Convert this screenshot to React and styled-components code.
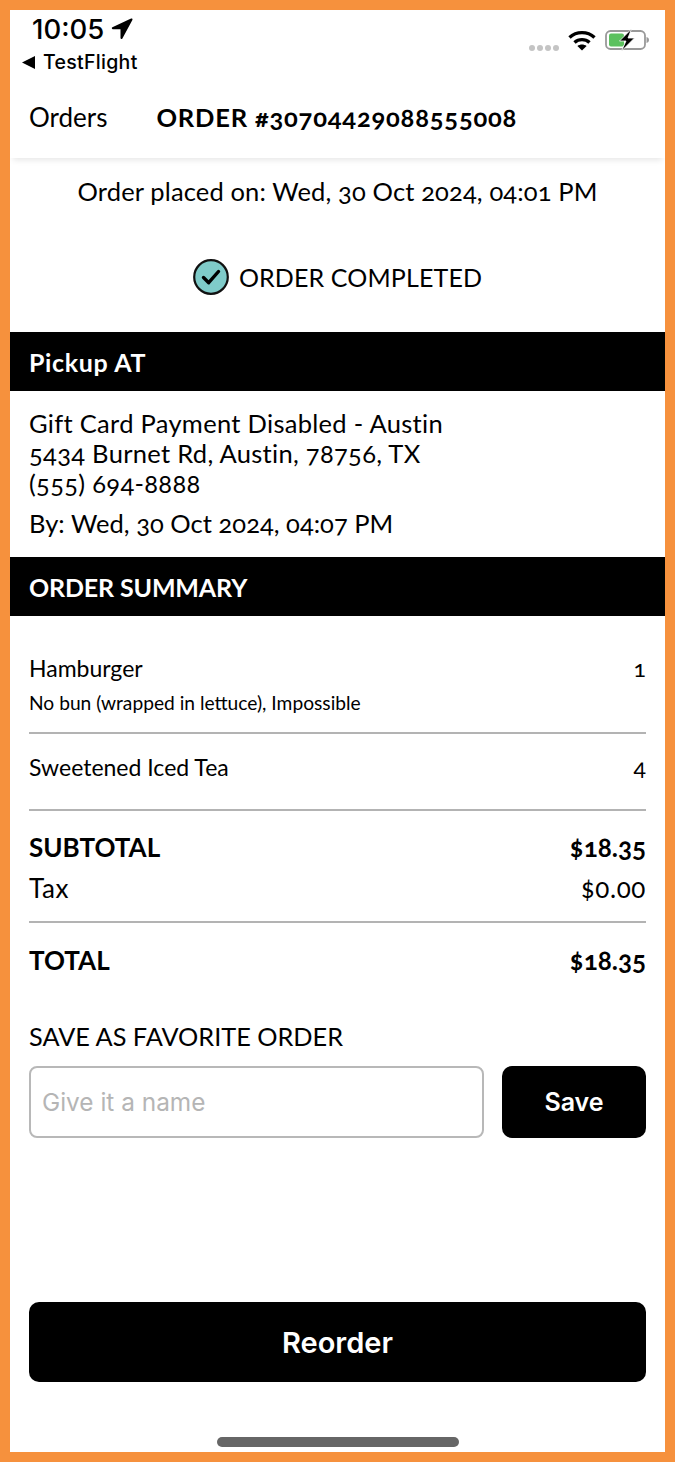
import styled, { createGlobalStyle } from 'styled-components';

const GlobalStyle = createGlobalStyle`
  html, body { margin: 0; padding: 0; background: #f6913d; }
  * { box-sizing: border-box; }
`;

const Frame = styled.div`
  width: 675px;
  height: 1462px;
  border: 10px solid #f6913d;
  background: #fff;
  display: flex;
  flex-direction: column;
  font-family: Lato, "Open Sans", sans-serif;
  font-variant-numeric: oldstyle-nums;
  color: #000;
  overflow: hidden;
`;

const StatusBar = styled.div`
  height: 80px;
  padding: 4px 14px 0 12px;
  display: flex;
  justify-content: space-between;
  font-family: Inter, sans-serif;
  font-variant-numeric: normal;
`;

const StatusLeft = styled.div`
  display: flex;
  flex-direction: column;
`;

const Clock = styled.div`
  display: flex;
  align-items: center;
  gap: 7px;
  margin-left: 10px;
  font-size: 27.5px;
  line-height: 30px;
  font-weight: 500;
`;

const BackLink = styled.div`
  display: flex;
  align-items: center;
  gap: 8px;
  margin-top: 6px;
  font-size: 19.5px;
  line-height: 24px;
  font-weight: 500;
  letter-spacing: 0.3px;
`;

const StatusRight = styled.div`
  display: flex;
  align-items: center;
  gap: 9px;
  height: 52px;
`;

const Signal = styled.div`
  display: flex;
  gap: 2px;
  margin-top: 16px;
`;

const SignalDot = styled.span`
  width: 6px;
  height: 6px;
  border-radius: 50%;
  background: #c4c4c4;
`;

const NavBar = styled.div`
  height: 68px;
  padding: 0 19px 14px;
  display: flex;
  align-items: center;
  gap: 49px;
  box-shadow: 0 5px 6px -3px rgba(0, 0, 0, 0.1);
`;

const NavBack = styled.div`
  font-size: 26px;
  font-weight: 400;
`;

const NavTitle = styled.div`
  font-size: 25.5px;
  font-weight: 700;
  letter-spacing: 0.8px;
`;

const PlacedOn = styled.div`
  margin-top: 18px;
  text-align: center;
  font-size: 25.5px;
  line-height: 30px;
  letter-spacing: 0.14px;
`;

const StatusRow = styled.div`
  margin-top: 53px;
  height: 36px;
  display: flex;
  justify-content: center;
  align-items: center;
  gap: 10px;
  font-size: 25px;
  letter-spacing: 0.13px;
`;

const SectionHeader = styled.div`
  height: 59px;
  margin-top: ${({ $top }) => $top}px;
  padding: 0 19px;
  display: flex;
  align-items: center;
  background: #000;
  color: #fff;
  font-size: 25px;
  font-weight: 700;
  letter-spacing: ${({ $spacing }) => $spacing}px;
`;

const Address = styled.div`
  margin-top: 17px;
  padding: 0 19px;
  font-size: 25.5px;
  line-height: 30px;
  letter-spacing: 0.3px;
`;

const PickupBy = styled.div`
  margin-top: 10px;
  padding: 0 19px;
  font-size: 25.5px;
  line-height: 30px;
  letter-spacing: 0.03px;
`;

const Summary = styled.div`
  padding: 0 19px;
  display: flex;
  flex-direction: column;
`;

const ItemRow = styled.div`
  display: flex;
  justify-content: space-between;
  align-items: center;
  padding-top: ${({ $top }) => $top}px;
  font-size: 23px;
  line-height: 28px;
`;

const ItemNote = styled.div`
  margin-top: 9px;
  font-size: 19.2px;
  line-height: 24px;
`;

const Divider = styled.div`
  height: 2px;
  background: #b3b3b3;
  margin-top: ${({ $top }) => $top}px;
`;

const TotalRow = styled.div`
  display: flex;
  justify-content: space-between;
  align-items: center;
  margin-top: ${({ $top }) => $top}px;
  font-size: 26px;
  line-height: 32px;
  font-weight: ${({ $bold }) => ($bold ? 700 : 400)};
  letter-spacing: ${({ $bold }) => ($bold ? 0 : 0.6)}px;
`;

const FavoriteLabel = styled.div`
  margin-top: 45px;
  font-size: 25.3px;
  line-height: 30px;
`;

const FavoriteRow = styled.div`
  margin-top: 15px;
  display: flex;
  gap: 18px;
`;

const NameInput = styled.input`
  flex: 1;
  min-width: 0;
  height: 72px;
  padding: 0 11px;
  border: 2px solid #b8b8b8;
  border-radius: 8px;
  background: #fff;
  font-family: Inter, sans-serif;
  font-size: 24.4px;
  outline: none;

  &::placeholder {
    color: #b5b5b5;
    opacity: 1;
  }
`;

const SolidButton = styled.button`
  border: none;
  border-radius: 10px;
  background: #000;
  color: #fff;
  font-family: Inter, sans-serif;
  font-weight: 600;
  padding: 0;
`;

const SaveButton = styled(SolidButton)`
  width: 144px;
  height: 72px;
  font-size: 25px;
`;

const ReorderButton = styled(SolidButton)`
  width: 617px;
  height: 80px;
  font-size: 29px;
  margin: 164px 0 0 19px;
`;

const HomeIndicator = styled.div`
  width: 242px;
  height: 10px;
  border-radius: 5px;
  background: #666;
  margin: 55px auto 0;
`;

const CheckBadge = () => (
  <svg width="36" height="36" viewBox="0 0 36 36">
    <circle cx="18" cy="18" r="16.8" fill="#7fcbc9" stroke="#111" strokeWidth="2.2" />
    <path d="M10.5 18.5l5.2 5.2L25.5 12.5" fill="none" stroke="#000" strokeWidth="3.4" strokeLinecap="round" strokeLinejoin="round" />
  </svg>
);

const LocationArrow = () => (
  <svg width="22" height="22" viewBox="0 0 22 22">
    <path d="M20.500 1.500L1.800 10.200H10.500V20z" fill="#000" stroke="#000" strokeWidth="2" strokeLinejoin="round" />
  </svg>
);

const BackTriangle = () => (
  <svg width="13" height="13" viewBox="0 0 13 13">
    <path d="M0 6.5L13 0v13z" fill="#000" />
  </svg>
);

const WifiIcon = () => (
  <svg width="28" height="21" viewBox="0 0 28 21">
    <path d="M1.5 7.5C8.5 1 19.5 1 26.5 7.5" fill="none" stroke="#000" strokeWidth="3.4" />
    <path d="M6.5 12.5c4.300-3.800 10.700-3.800 15 0" fill="none" stroke="#000" strokeWidth="3.4" />
    <path d="M14 20.500l-4.600-4.600c2.700-2 6.500-2 9.200 0z" fill="#000" />
  </svg>
);

const BatteryIcon = () => (
  <svg width="46" height="22" viewBox="0 0 46 22">
    <rect x="1" y="2" width="39" height="18" rx="4.500" fill="none" stroke="#999" strokeWidth="1.800" />
    <rect x="4" y="4.500" width="15" height="13" rx="2" fill="#5cc15f" />
    <path d="M41.500 8c1.600.4 2.500 1.500 2.500 3s-.9 2.600-2.500 3z" fill="#999" />
    <path d="M26.500 0L14.500 12h6.500L16.500 22 29.500 9h-6.500z" fill="#000" stroke="#fff" strokeWidth="0.800" />
  </svg>
);

export default function App() {
  return (
    <>
      <GlobalStyle />
      <Frame>
        <StatusBar>
          <StatusLeft>
            <Clock>
              10:05
              <LocationArrow />
            </Clock>
            <BackLink>
              <BackTriangle />
              TestFlight
            </BackLink>
          </StatusLeft>
          <StatusRight>
            <Signal>
              <SignalDot />
              <SignalDot />
              <SignalDot />
              <SignalDot />
            </Signal>
            <WifiIcon />
            <BatteryIcon />
          </StatusRight>
        </StatusBar>

        <NavBar>
          <NavBack>Orders</NavBack>
          <NavTitle>ORDER #30704429088555008</NavTitle>
        </NavBar>

        <PlacedOn>Order placed on: Wed, 30 Oct 2024, 04:01 PM</PlacedOn>

        <StatusRow>
          <CheckBadge />
          ORDER COMPLETED
        </StatusRow>

        <SectionHeader $top={37} $spacing={0.65}>Pickup AT</SectionHeader>
        <Address>
          Gift Card Payment Disabled - Austin
          <br />
          5434 Burnet Rd, Austin, 78756, TX
          <br />
          (555) 694-8888
        </Address>
        <PickupBy>By: Wed, 30 Oct 2024, 04:07 PM</PickupBy>

        <SectionHeader $top={19} $spacing={-0.15}>ORDER SUMMARY</SectionHeader>
        <Summary>
          <ItemRow $top={38}>
            <span>Hamburger</span>
            <span>1</span>
          </ItemRow>
          <ItemNote>No bun (wrapped in lettuce), Impossible</ItemNote>
          <Divider $top={17} />
          <ItemRow $top={19}>
            <span>Sweetened Iced Tea</span>
            <span>4</span>
          </ItemRow>
          <Divider $top={28} />
          <TotalRow $bold $top={20}>
            <span>SUBTOTAL</span>
            <span>$18.35</span>
          </TotalRow>
          <TotalRow $top={9}>
            <span>Tax</span>
            <span>$0.00</span>
          </TotalRow>
          <Divider $top={17} />
          <TotalRow $bold $top={21}>
            <span>TOTAL</span>
            <span>$18.35</span>
          </TotalRow>
          <FavoriteLabel>SAVE AS FAVORITE ORDER</FavoriteLabel>
          <FavoriteRow>
            <NameInput placeholder="Give it a name" />
            <SaveButton>Save</SaveButton>
          </FavoriteRow>
        </Summary>

        <ReorderButton>Reorder</ReorderButton>
        <HomeIndicator />
      </Frame>
    </>
  );
}
